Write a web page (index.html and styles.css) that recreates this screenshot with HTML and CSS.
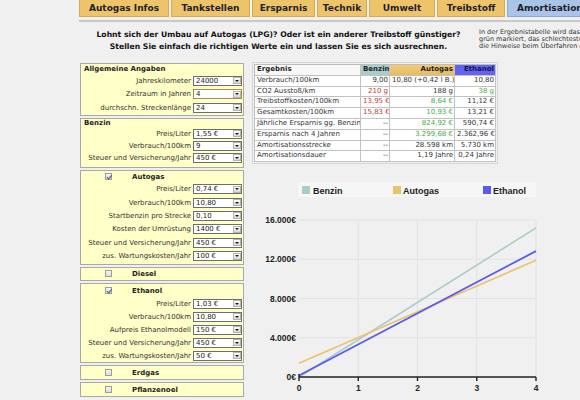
FILE: index.html
```html
<!DOCTYPE html>
<html lang="de">
<head>
<meta charset="utf-8">
<title>Amortisation</title>
<link rel="stylesheet" href="styles.css">
</head>
<body>
<nav class="tabs">
  <div class="tab t-infos">Autogas Infos</div>
  <div class="tab t-tank">Tankstellen</div>
  <div class="tab t-spar">Ersparnis</div>
  <div class="tab t-tech">Technik</div>
  <div class="tab t-umwelt">Umwelt</div>
  <div class="tab t-treib">Treibstoff</div>
  <div class="tab t-amort active">Amortisation</div>
</nav>
<header class="intro">
  <div class="lead">
    <p>Lohnt sich der Umbau auf Autogas (LPG)? Oder ist ein anderer Treibstoff günstiger?</p>
    <p>Stellen Sie einfach die richtigen Werte ein und lassen Sie es sich ausrechnen.</p>
  </div>
  <div class="note">
    <p>In der Ergebnistabelle wird das beste Ergebnis</p>
    <p>grün markiert, das schlechteste rot. Beachten Sie</p>
    <p>die Hinweise beim Überfahren der Zellen.</p>
  </div>
</header>
<main class="layout">
  <aside class="form">
    <section class="box box-general">
      <div class="title">Allgemeine Angaben</div>
      <div class="row"><span class="label">Jahreskilometer</span><span class="sel">24000<span class="btn"></span></span></div>
      <div class="row"><span class="label">Zeitraum in Jahren</span><span class="sel focus">4<span class="btn"></span></span></div>
      <div class="row"><span class="label">durchschn. Streckenlänge</span><span class="sel">24<span class="btn"></span></span></div>
    </section>
    <section class="box box-benzin">
      <div class="title">Benzin</div>
      <div class="row"><span class="label">Preis/Liter</span><span class="sel">1,55 €<span class="btn"></span></span></div>
      <div class="row"><span class="label">Verbrauch/100km</span><span class="sel">9<span class="btn"></span></span></div>
      <div class="row"><span class="label">Steuer und Versicherung/Jahr</span><span class="sel">450 €<span class="btn"></span></span></div>
    </section>
    <section class="box box-autogas">
      <div class="fuel-head"><span class="check on"></span><span>Autogas</span></div>
      <div class="row"><span class="label">Preis/Liter</span><span class="sel">0,74 €<span class="btn"></span></span></div>
      <div class="row"><span class="label">Verbrauch/100km</span><span class="sel">10,80<span class="btn"></span></span></div>
      <div class="row"><span class="label">Startbenzin pro Strecke</span><span class="sel">0,10<span class="btn"></span></span></div>
      <div class="row"><span class="label">Kosten der Umrüstung</span><span class="sel">1400 €<span class="btn"></span></span></div>
      <div class="row"><span class="label">Steuer und Versicherung/Jahr</span><span class="sel">450 €<span class="btn"></span></span></div>
      <div class="row"><span class="label">zus. Wartungskosten/Jahr</span><span class="sel">100 €<span class="btn"></span></span></div>
    </section>
    <section class="box box-closed">
      <div class="fuel-head"><span class="check"></span><span>Diesel</span></div>
    </section>
    <section class="box box-ethanol">
      <div class="fuel-head"><span class="check on"></span><span>Ethanol</span></div>
      <div class="row"><span class="label">Preis/Liter</span><span class="sel">1,03 €<span class="btn"></span></span></div>
      <div class="row"><span class="label">Verbrauch/100km</span><span class="sel">10,80<span class="btn"></span></span></div>
      <div class="row"><span class="label">Aufpreis Ethanolmodell</span><span class="sel">150 €<span class="btn"></span></span></div>
      <div class="row"><span class="label">Steuer und Versicherung/Jahr</span><span class="sel">450 €<span class="btn"></span></span></div>
      <div class="row"><span class="label">zus. Wartungskosten/Jahr</span><span class="sel">50 €<span class="btn"></span></span></div>
    </section>
    <section class="box box-closed box-tall">
      <div class="fuel-head"><span class="check"></span><span>Erdgas</span></div>
    </section>
    <section class="box box-closed box-tall">
      <div class="fuel-head"><span class="check"></span><span>Pflanzenoel</span></div>
    </section>
  </aside>
  <section class="results">
    <div class="frame">
      <table class="result-table">
        <colgroup><col class="c1"><col class="c2"><col class="c3"><col class="c4"></colgroup>
        <thead>
          <tr><th class="h-name">Ergebnis</th><th class="h-benzin">Benzin</th><th class="h-autogas">Autogas</th><th class="h-ethanol">Ethanol</th></tr>
        </thead>
        <tbody>
          <tr><td>Verbrauch/100km</td><td>9,00</td><td>10,80 (+0,42 l B.)</td><td>10,80</td></tr>
          <tr><td>CO2 Ausstoß/km</td><td class="bad">210 g</td><td>188 g</td><td class="good">38 g</td></tr>
          <tr><td>Treibstoffkosten/100km</td><td class="bad">13,95 €</td><td class="good">8,64 €</td><td>11,12 €</td></tr>
          <tr><td>Gesamtkosten/100km</td><td class="bad">15,83 €</td><td class="good">10,93 €</td><td>13,21 €</td></tr>
          <tr><td>Jährliche Ersparnis gg. Benzin</td><td>--</td><td class="good">824,92 €</td><td>590,74 €</td></tr>
          <tr><td>Ersparnis nach 4 Jahren</td><td>--</td><td class="good">3.299,68 €</td><td>2.362,96 €</td></tr>
          <tr><td>Amortisationsstrecke</td><td>--</td><td>28.598 km</td><td>5.730 km</td></tr>
          <tr><td>Amortisationsdauer</td><td>--</td><td>1,19 Jahre</td><td>0,24 Jahre</td></tr>
        </tbody>
      </table>
    </div>
    <svg class="chart" width="326" height="228" viewBox="0 0 326 228">
      <rect class="legend-bg" x="44" y="10" width="238" height="15"/>
      <rect x="48" y="14" width="8" height="8" fill="#a9cccb"/>
      <text class="legend" x="59" y="21.5">Benzin</text>
      <rect x="139" y="14" width="8" height="8" fill="#e9c26c"/>
      <text class="legend" x="149" y="21.5">Autogas</text>
      <rect x="229" y="14" width="8" height="8" fill="#5a5aee"/>
      <text class="legend" x="239" y="21.5">Ethanol</text>
      <g class="grid">
        <line x1="45" y1="48" x2="282" y2="48"/>
        <line x1="45" y1="87.25" x2="282" y2="87.25"/>
        <line x1="45" y1="126.5" x2="282" y2="126.5"/>
        <line x1="45" y1="165.75" x2="282" y2="165.75"/>
        <line x1="104.25" y1="48" x2="104.25" y2="205"/>
        <line x1="163.5" y1="48" x2="163.5" y2="205"/>
        <line x1="222.75" y1="48" x2="222.75" y2="205"/>
        <line x1="282" y1="48" x2="282" y2="205"/>
      </g>
      <g class="ylab">
        <text x="42" y="51">16.000€</text>
        <text x="42" y="90.25">12.000€</text>
        <text x="42" y="129.5">8.000€</text>
        <text x="42" y="168.75">4.000€</text>
        <text x="42" y="208">0€</text>
      </g>
      <line class="s-benzin" x1="45" y1="205" x2="282" y2="55.9"/>
      <line class="s-autogas" x1="45" y1="191.3" x2="282" y2="88.3"/>
      <line class="s-ethanol" x1="45" y1="203.5" x2="282" y2="79.1"/>
      <g class="axis">
        <line x1="45" y1="205" x2="282" y2="205"/>
        <line x1="45" y1="202" x2="45" y2="209"/>
        <line x1="104.25" y1="205" x2="104.25" y2="209"/>
        <line x1="163.5" y1="205" x2="163.5" y2="209"/>
        <line x1="222.75" y1="205" x2="222.75" y2="209"/>
        <line x1="282" y1="205" x2="282" y2="209"/>
      </g>
      <g class="xlab">
        <text x="45" y="218.5">0</text>
        <text x="104.25" y="218.5">1</text>
        <text x="163.5" y="218.5">2</text>
        <text x="222.75" y="218.5">3</text>
        <text x="282" y="218.5">4</text>
      </g>
    </svg>
  </section>
</main>
</body>
</html>
```
FILE: styles.css
```css
* { box-sizing: border-box; }
html, body {
  margin: 0;
  width: 580px;
  height: 400px;
  overflow: hidden;
  background: #f0f0f0;
}
body {
  font-family: "DejaVu Sans", Verdana, sans-serif;
  color: #333;
}
p { margin: 0; }

/* tabs */
.tabs {
  display: flex;
  gap: 2px;
  margin-left: 79px;
  height: 22px;
  border-bottom: 2px solid #c8c8c8;
}
.tab {
  flex: none;
  height: 17px;
  background: #eec46b;
  border: 1px solid #d3ab57;
  border-top: 0;
  font-weight: bold;
  font-size: 9px;
  line-height: 16px;
  text-align: center;
  color: #1d1d2b;
  white-space: nowrap;
}
.t-infos { width: 90px; }
.t-tank { width: 79px; }
.t-spar { width: 63px; }
.t-tech { width: 50px; }
.t-umwelt { width: 66px; }
.t-treib { width: 68px; }
.t-amort { width: 90px; text-align: left; padding-left: 9px; }
.tab.active {
  background: #a9c4e6;
  border-color: #8eaad0;
}

/* intro */
.intro {
  display: flex;
  padding-top: 7px;
}
.lead {
  flex: none;
  width: 399px;
  margin-left: 79px;
  text-align: center;
  font-weight: bold;
  font-size: 7.7px;
  line-height: 12px;
  color: #111;
  white-space: nowrap;
}
.note {
  flex: 1;
  min-width: 0;
  overflow: hidden;
  white-space: nowrap;
  font-size: 6.5px;
  line-height: 7px;
  padding-left: 1px;
  color: #333;
}

/* layout */
.layout {
  display: flex;
  gap: 8px;
  padding-top: 9px;
  padding-left: 80px;
}
.form {
  flex: none;
  width: 164px;
  margin-top: 1px;
  display: flex;
  flex-direction: column;
  gap: 2px;
}
.box {
  background: #ffffc8;
  border: 1px solid #a8a8a8;
}
.title {
  font-weight: bold;
  font-size: 7px;
  line-height: 9px;
  padding-left: 3px;
  color: #1e1e1e;
}
.box-general { padding-top: 1px; }
.box-general .row { height: 13.5px; }
.box-benzin { padding-bottom: 3px; }
.box-benzin .row { height: 12px; }
.box-autogas { padding-bottom: 1.6px; }
.box-autogas .row { height: 13.4px; }
.box-ethanol .row { height: 13px; }
.box-ethanol .fuel-head { height: 13px; }
.box-tall .fuel-head { height: 13px; }

.fuel-head {
  display: flex;
  align-items: center;
  gap: 20px;
  height: 12px;
  padding-left: 24px;
  font-weight: bold;
  font-size: 7px;
  color: #1e1e1e;
}
.check {
  flex: none;
  width: 7px;
  height: 7px;
  margin-top: -1px;
  border: 1px solid #9c9c9c;
  background: linear-gradient(#f6f6f6, #dcdcdc);
  position: relative;
}
.check.on::after {
  content: "";
  position: absolute;
  left: 1.5px;
  top: 0;
  width: 1.5px;
  height: 3.5px;
  border-right: 1px solid #55557a;
  border-bottom: 1px solid #55557a;
  transform: rotate(40deg);
}

.row {
  display: flex;
  align-items: center;
  justify-content: flex-end;
}
.label {
  font-size: 7px;
  padding-right: 2px;
  white-space: nowrap;
  color: #333;
}
.sel {
  flex: none;
  display: flex;
  align-items: center;
  width: 49px;
  height: 10px;
  margin-right: 1px;
  padding-left: 2px;
  background: #fff;
  border: 1px solid #6e6e6e;
  font-size: 7px;
  line-height: 8px;
  color: #222;
  white-space: nowrap;
}
.sel.focus { border-color: #a88c4c; }
.btn {
  margin-left: auto;
  margin-right: 0.5px;
  width: 8px;
  height: 7px;
  background: linear-gradient(#ffffff, #d6d6d6);
  border: 1px solid #b4b4b4;
  display: flex;
  align-items: center;
  justify-content: center;
}
.btn::before {
  content: "";
  border-left: 2px solid transparent;
  border-right: 2px solid transparent;
  border-top: 2px solid #1a1a1a;
}

/* results */
.results {
  flex: none;
  width: 328px;
  display: flex;
  flex-direction: column;
  align-items: flex-start;
}
.frame {
  border: 1px solid #d6d6d6;
  padding: 1px;
}
.result-table {
  border-collapse: separate;
  border-spacing: 0;
  table-layout: fixed;
  width: 242px;
  border-left: 1px solid #bdbdbd;
  border-top: 1px solid #bdbdbd;
  font-size: 7px;
}
.c1 { width: 106px; }
.c2 { width: 29px; }
.c3 { width: 65px; }
.c4 { width: 41px; }
.result-table th,
.result-table td {
  border-right: 1px solid #c2c2c2;
  border-bottom: 1px solid #c2c2c2;
  padding: 0 1px 0 2px;
  line-height: 9.8px;
  white-space: nowrap;
  overflow: hidden;
  background: #fff;
  text-align: right;
  color: #333;
}
.result-table th {
  font-weight: bold;
  color: #1e1e1e;
}
.result-table th:first-child,
.result-table td:first-child { text-align: left; }
.result-table th.h-name { background: #f8f8f8; }
.result-table th.h-benzin { background: #a8cdca; }
.result-table th.h-autogas { background: linear-gradient(#f2cc78, #e6bb62); }
.result-table th.h-ethanol { background: #6464ef; color: #12125a; }
.result-table td.bad { color: #c23c3c; }
.result-table td.good { color: #46ad46; }

/* chart */
.chart {
  display: block;
  margin-top: 8px;
  margin-left: 2px;
}
.legend-bg { fill: #f6f6f6; }
.chart text {
  font-family: "Liberation Sans", Arial, sans-serif;
  font-weight: bold;
  fill: #222;
}
.legend { font-size: 9px; fill: #333; }
.grid line { stroke: #e2e2e2; stroke-width: 1; }
.ylab text { font-size: 8.5px; text-anchor: end; }
.xlab text { font-size: 8.5px; text-anchor: middle; }
.axis line { stroke: #222; stroke-width: 1.4; }
.s-benzin { stroke: #a9cccb; stroke-width: 1.6; }
.s-autogas { stroke: #e9c26c; stroke-width: 1.6; }
.s-ethanol { stroke: #5a5aee; stroke-width: 1.8; }
```
